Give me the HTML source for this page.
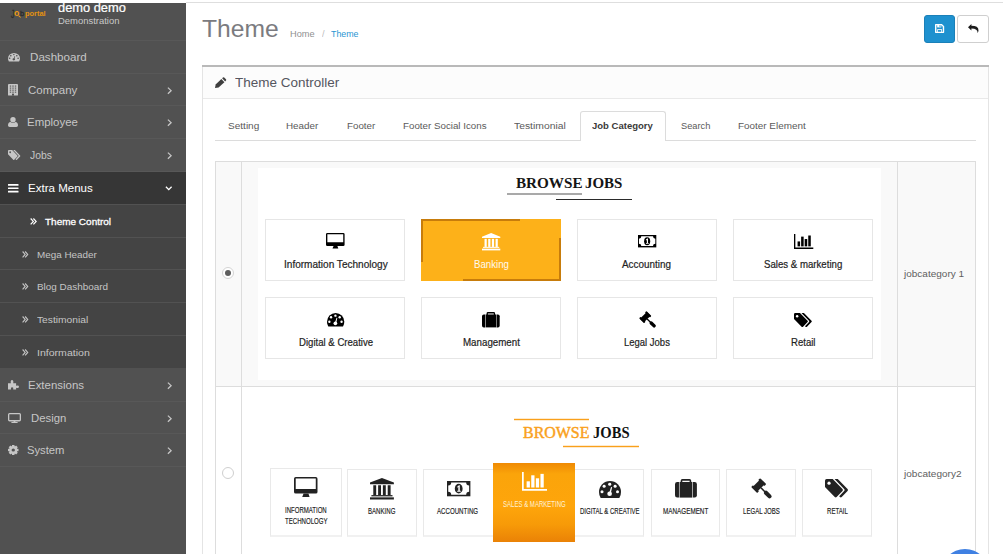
<!DOCTYPE html>
<html lang="en"><head><meta charset="utf-8"><title>Theme</title>
<style>
html,body{margin:0;padding:0;}
body{width:1003px;height:554px;background:#ffffff;font-family:"Liberation Sans", sans-serif;}
#root{position:relative;width:1003px;height:554px;overflow:hidden;background:#ffffff;}
.b{position:absolute;}
.i{position:absolute;display:block;overflow:visible;}
.t{position:absolute;white-space:nowrap;line-height:1;transform-origin:0 0;}
</style></head>
<body>
<div id="root">
<div class="b" style="left:186px;top:2px;width:817px;height:1px;background:#dedede;"></div>
<div class="b" style="left:0px;top:3px;width:186px;height:551px;background:#515151;"></div>
<div class="b" style="left:0px;top:40px;width:186px;height:1px;background:#585858;"></div>
<div class="b" style="left:0px;top:73px;width:186px;height:1px;background:#585858;"></div>
<div class="b" style="left:0px;top:105px;width:186px;height:1px;background:#585858;"></div>
<div class="b" style="left:0px;top:138px;width:186px;height:1px;background:#585858;"></div>
<div class="b" style="left:0px;top:401px;width:186px;height:1px;background:#585858;"></div>
<div class="b" style="left:0px;top:433px;width:186px;height:1px;background:#585858;"></div>
<div class="b" style="left:0px;top:466px;width:186px;height:1px;background:#585858;"></div>
<div class="b" style="left:0px;top:171px;width:186px;height:1px;background:#585858;"></div>
<div class="b" style="left:0px;top:172px;width:186px;height:32px;background:#363636;"></div>
<div class="b" style="left:0px;top:204px;width:186px;height:164px;background:#444444;"></div>
<div class="b" style="left:0px;top:204px;width:186px;height:1px;background:#525252;"></div>
<div class="b" style="left:0px;top:237px;width:186px;height:1px;background:#525252;"></div>
<div class="b" style="left:0px;top:269px;width:186px;height:1px;background:#525252;"></div>
<div class="b" style="left:0px;top:302px;width:186px;height:1px;background:#525252;"></div>
<div class="b" style="left:0px;top:335px;width:186px;height:1px;background:#525252;"></div>
<div class="b" style="left:18.0px;top:16.2px;width:3.0px;height:1.2px;background:#ef9a13;transform:rotate(38deg);border-radius:1px;"></div>
<div class="b" style="left:924px;top:15px;width:31px;height:28px;background:#1e91cf;border:1px solid #1b80b8;box-sizing:border-box;border-radius:3px;"></div>
<div class="b" style="left:957px;top:15px;width:32px;height:28px;background:#ffffff;border:1px solid #cfcfcf;box-sizing:border-box;border-radius:3px;"></div>
<div class="b" style="left:202px;top:65px;width:787px;height:495px;background:#ffffff;border:1px solid #e4e4e4;box-sizing:border-box;"></div>
<div class="b" style="left:202px;top:65px;width:787px;height:2px;background:#b9b9b9;"></div>
<div class="b" style="left:203px;top:67px;width:785px;height:31px;background:#fcfcfc;"></div>
<div class="b" style="left:203px;top:98px;width:785px;height:1px;background:#e9e9e9;"></div>
<div class="b" style="left:215px;top:140px;width:761px;height:1px;background:#dcdcdc;"></div>
<div class="b" style="left:580px;top:111px;width:86px;height:30px;background:#ffffff;border:1px solid #dcdcdc;box-sizing:border-box;border-radius:3px;border-bottom:none;border-bottom-left-radius:0;border-bottom-right-radius:0;"></div>
<div class="b" style="left:215px;top:161px;width:761px;height:226px;background:#f9f9f9;"></div>
<div class="b" style="left:215px;top:161px;width:761px;height:1px;background:#dddddd;"></div>
<div class="b" style="left:215px;top:386px;width:761px;height:1px;background:#dddddd;"></div>
<div class="b" style="left:215px;top:161px;width:1px;height:393px;background:#dddddd;"></div>
<div class="b" style="left:975px;top:161px;width:1px;height:393px;background:#dddddd;"></div>
<div class="b" style="left:241px;top:161px;width:1px;height:393px;background:#dddddd;"></div>
<div class="b" style="left:897px;top:161px;width:1px;height:393px;background:#dddddd;"></div>
<div class="b" style="left:258px;top:168px;width:623px;height:212px;background:#ffffff;"></div>
<div class="b" style="left:222px;top:267px;width:12px;height:12px;background:#ffffff;border:1px solid #d4d4d4;box-sizing:border-box;border-radius:6px;"></div>
<div class="b" style="left:225.2px;top:270.2px;width:5.6px;height:5.6px;background:#5e5e5e;border-radius:3px;"></div>
<div class="b" style="left:222px;top:467px;width:12px;height:12px;background:#ffffff;border:1px solid #cfcfcf;box-sizing:border-box;border-radius:6px;"></div>
<div class="b" style="left:507px;top:193px;width:75px;height:1.8px;background:#a9a9a9;"></div>
<div class="b" style="left:556.3px;top:198.6px;width:75.7px;height:1.0px;background:#2a2a2a;"></div>
<div class="b" style="left:265.2px;top:219.4px;width:139.5px;height:61.3px;background:#ffffff;border:1px solid #e6e6e6;box-sizing:border-box;"></div>
<div class="b" style="left:265.2px;top:297.3px;width:139.5px;height:61.5px;background:#ffffff;border:1px solid #e6e6e6;box-sizing:border-box;"></div>
<div class="b" style="left:421.2px;top:219.4px;width:139.5px;height:61.3px;background:#ffffff;border:1px solid #e6e6e6;box-sizing:border-box;"></div>
<div class="b" style="left:421.2px;top:297.3px;width:139.5px;height:61.5px;background:#ffffff;border:1px solid #e6e6e6;box-sizing:border-box;"></div>
<div class="b" style="left:577.2px;top:219.4px;width:139.5px;height:61.3px;background:#ffffff;border:1px solid #e6e6e6;box-sizing:border-box;"></div>
<div class="b" style="left:577.2px;top:297.3px;width:139.5px;height:61.5px;background:#ffffff;border:1px solid #e6e6e6;box-sizing:border-box;"></div>
<div class="b" style="left:733.2px;top:219.4px;width:139.5px;height:61.3px;background:#ffffff;border:1px solid #e6e6e6;box-sizing:border-box;"></div>
<div class="b" style="left:733.2px;top:297.3px;width:139.5px;height:61.5px;background:#ffffff;border:1px solid #e6e6e6;box-sizing:border-box;"></div>
<div class="b" style="left:420.9px;top:219px;width:140.2px;height:62px;background:#fdb119;"></div>
<div class="b" style="left:420.9px;top:219px;width:98.7px;height:2px;background:#c77c0b;"></div>
<div class="b" style="left:421px;top:219px;width:1.6px;height:42.8px;background:#c77c0b;"></div>
<div class="b" style="left:462.8px;top:279px;width:98.3px;height:2px;background:#c77c0b;"></div>
<div class="b" style="left:559.4px;top:237.9px;width:1.6px;height:43.1px;background:#c77c0b;"></div>
<div class="b" style="left:513.9px;top:419px;width:75.2px;height:1px;background:#f9a11c;"></div>
<div class="b" style="left:513.9px;top:418px;width:75.2px;height:3px;background:rgba(249,161,28,0.22);"></div>
<div class="b" style="left:563.3px;top:446px;width:75.6px;height:1px;background:#f9a11c;"></div>
<div class="b" style="left:563.3px;top:445px;width:75.6px;height:3px;background:rgba(249,161,28,0.22);"></div>
<div class="b" style="left:270.2px;top:468.3px;width:71.6px;height:68.7px;background:#fff;border:1px solid #e9e9e9;box-sizing:border-box;border-bottom:2px solid #f1f1f1;"></div>
<div class="b" style="left:347.3px;top:469.3px;width:69.4px;height:67.7px;background:#fff;border:1px solid #e9e9e9;box-sizing:border-box;border-bottom:2px solid #f1f1f1;"></div>
<div class="b" style="left:423.3px;top:469.3px;width:70.7px;height:67.7px;background:#fff;border:1px solid #e9e9e9;box-sizing:border-box;border-bottom:2px solid #f1f1f1;"></div>
<div class="b" style="left:574px;top:469.3px;width:70.1px;height:67.7px;background:#fff;border:1px solid #e9e9e9;box-sizing:border-box;border-bottom:2px solid #f1f1f1;"></div>
<div class="b" style="left:650.9px;top:469.3px;width:69.0px;height:67.7px;background:#fff;border:1px solid #e9e9e9;box-sizing:border-box;border-bottom:2px solid #f1f1f1;"></div>
<div class="b" style="left:726.1px;top:469.3px;width:70.0px;height:67.7px;background:#fff;border:1px solid #e9e9e9;box-sizing:border-box;border-bottom:2px solid #f1f1f1;"></div>
<div class="b" style="left:802.4px;top:469.3px;width:69.4px;height:67.7px;background:#fff;border:1px solid #e9e9e9;box-sizing:border-box;border-bottom:2px solid #f1f1f1;"></div>
<div class="b" style="left:492.9px;top:462.5px;width:82.2px;height:79.6px;background:linear-gradient(180deg,#ef8a04 0%,#fba40a 14%,#fea50b 55%,#f79a08 78%,#ea8206 100%);"></div>
<div class="b" style="left:941px;top:548.6px;width:48px;height:48.0px;background:#3f80e2;border-radius:24px;"></div>
<svg class="i" style="left:8px;top:53.4px;width:12px;height:8.4px;color:#c6c6c6;" viewBox="0 0 24 18.6" preserveAspectRatio="none" fill="currentColor"><path d="M0,12A12,12 0 0 1 24,12Q24,15.6 22.2,18.6H1.8Q0,15.6 0,12Z"/><g fill="#515151"><circle cx="3.3" cy="11.9" r="1.65"/><circle cx="5.6" cy="5.9" r="1.65"/><circle cx="11.7" cy="3.6" r="1.65"/><circle cx="17.6" cy="5.9" r="1.65"/><circle cx="20.2" cy="11.9" r="1.65"/><circle cx="11.6" cy="14.1" r="2.55"/><path d="M11.3,12.6L13.2,6.5L14.3,6.8L12.9,13.4Z"/></g></svg>
<svg class="i" style="left:8px;top:84.4px;width:10px;height:11.6px;color:#c6c6c6;" viewBox="0 0 10 12" preserveAspectRatio="none" fill="currentColor"><rect x="0" y="0" width="10" height="12" rx="0.9"/><rect x="1.8" y="1.6" width="1.4" height="1.1" fill="#515151"/><rect x="4.3" y="1.6" width="1.4" height="1.1" fill="#515151"/><rect x="6.8" y="1.6" width="1.4" height="1.1" fill="#515151"/><rect x="1.8" y="3.7" width="1.4" height="1.1" fill="#515151"/><rect x="4.3" y="3.7" width="1.4" height="1.1" fill="#515151"/><rect x="6.8" y="3.7" width="1.4" height="1.1" fill="#515151"/><rect x="1.8" y="5.800000000000001" width="1.4" height="1.1" fill="#515151"/><rect x="4.3" y="5.800000000000001" width="1.4" height="1.1" fill="#515151"/><rect x="6.8" y="5.800000000000001" width="1.4" height="1.1" fill="#515151"/><rect x="1.8" y="7.9" width="1.4" height="1.1" fill="#515151"/><rect x="4.3" y="7.9" width="1.4" height="1.1" fill="#515151"/><rect x="6.8" y="7.9" width="1.4" height="1.1" fill="#515151"/><rect x="4" y="10" width="2" height="2" fill="#515151"/></svg>
<svg class="i" style="left:8px;top:117px;width:10px;height:10px;color:#c6c6c6;" viewBox="0 0 10 10" preserveAspectRatio="none" fill="currentColor"><circle cx="5" cy="2.7" r="2.7"/><path d="M0,8.6Q0,5.4 2.6,5.1Q5,6.9 7.4,5.1Q10,5.4 10,8.6Q10,10 8.4,10H1.6Q0,10 0,8.6Z"/></svg>
<svg class="i" style="left:8px;top:150px;width:12.5px;height:10px;color:#c6c6c6;" viewBox="0 0 24.8 19.2" preserveAspectRatio="none" fill="currentColor"><path d="M0,1.7Q0,0 1.7,0H8.2L18.6,10.4Q19.6,11.4 18.6,12.4L12.4,18.6Q11.4,19.6 10.4,18.6L0,8.2Z"/><circle cx="4.3" cy="4.3" r="1.7" fill="#515151"/><path d="M10.2,0H13.6L24,10.4Q25,11.4 24,12.4L17.8,18.6Q16.8,19.6 15.8,18.6L15.1,17.9L20.6,12.1Q21.3,11.4 20.6,10.7Z"/></svg>
<svg class="i" style="left:8px;top:184px;width:10.5px;height:8.5px;color:#ffffff;" viewBox="0 0 10.5 8.5" preserveAspectRatio="none" fill="currentColor"><rect x="0" y="0" width="10.5" height="1.7" rx=".3"/><rect x="0" y="3.4" width="10.5" height="1.7" rx=".3"/><rect x="0" y="6.8" width="10.5" height="1.7" rx=".3"/></svg>
<svg class="i" style="left:8px;top:379.5px;width:11px;height:9.5px;color:#c6c6c6;" viewBox="0 0 11 9.6" preserveAspectRatio="none" fill="currentColor"><path d="M0,3.4H2.9Q2.2,0.2 4,0Q5.9,0.2 5.2,3.4H8.1V5.9Q10.9,5 11,6.9Q10.9,8.8 8.1,7.9V9.6H5.2Q5.8,7.4 4.1,7.4Q2.4,7.4 3,9.6H0Z"/></svg>
<svg class="i" style="left:8px;top:413px;width:13px;height:10px;color:#c6c6c6;" viewBox="0 0 13 10" preserveAspectRatio="none" fill="currentColor"><rect x="0.65" y="0.65" width="11.7" height="7.1" rx="0.9" fill="none" stroke="currentColor" stroke-width="1.3"/><rect x="3.4" y="8.9" width="6.2" height="1.1"/><rect x="5.6" y="7.6" width="1.8" height="1.6"/></svg>
<svg class="i" style="left:8px;top:445.3px;width:10.5px;height:10.0px;color:#c6c6c6;" viewBox="-5.25 -5.25 10.5 10.5" preserveAspectRatio="none" fill="currentColor"><circle r="4.1"/><rect x="-1.25" y="-5.25" width="2.5" height="10.5" transform="rotate(0)"/><rect x="-1.25" y="-5.25" width="2.5" height="10.5" transform="rotate(45)"/><rect x="-1.25" y="-5.25" width="2.5" height="10.5" transform="rotate(90)"/><rect x="-1.25" y="-5.25" width="2.5" height="10.5" transform="rotate(135)"/><circle r="1.7" fill="#515151"/></svg>
<svg class="i" style="left:166.8px;top:86.8px;width:5.2px;height:7.3px;color:#c6c6c6;" viewBox="0 0 5.2 7.3" preserveAspectRatio="none" fill="currentColor"><path fill="none" stroke="currentColor" stroke-width="1.3" d="M0.9,0.6L4.1,3.65L0.9,6.7"/></svg>
<svg class="i" style="left:166.8px;top:118.8px;width:5.2px;height:7.3px;color:#c6c6c6;" viewBox="0 0 5.2 7.3" preserveAspectRatio="none" fill="currentColor"><path fill="none" stroke="currentColor" stroke-width="1.3" d="M0.9,0.6L4.1,3.65L0.9,6.7"/></svg>
<svg class="i" style="left:166.8px;top:151.79999999999998px;width:5.2px;height:7.3px;color:#c6c6c6;" viewBox="0 0 5.2 7.3" preserveAspectRatio="none" fill="currentColor"><path fill="none" stroke="currentColor" stroke-width="1.3" d="M0.9,0.6L4.1,3.65L0.9,6.7"/></svg>
<svg class="i" style="left:166.8px;top:381.8px;width:5.2px;height:7.3px;color:#c6c6c6;" viewBox="0 0 5.2 7.3" preserveAspectRatio="none" fill="currentColor"><path fill="none" stroke="currentColor" stroke-width="1.3" d="M0.9,0.6L4.1,3.65L0.9,6.7"/></svg>
<svg class="i" style="left:166.8px;top:414.8px;width:5.2px;height:7.3px;color:#c6c6c6;" viewBox="0 0 5.2 7.3" preserveAspectRatio="none" fill="currentColor"><path fill="none" stroke="currentColor" stroke-width="1.3" d="M0.9,0.6L4.1,3.65L0.9,6.7"/></svg>
<svg class="i" style="left:166.8px;top:446.8px;width:5.2px;height:7.3px;color:#c6c6c6;" viewBox="0 0 5.2 7.3" preserveAspectRatio="none" fill="currentColor"><path fill="none" stroke="currentColor" stroke-width="1.3" d="M0.9,0.6L4.1,3.65L0.9,6.7"/></svg>
<svg class="i" style="left:164.5px;top:185.7px;width:7.5px;height:4.7px;color:#ffffff;" viewBox="0 0 7.5 4.7" preserveAspectRatio="none" fill="currentColor"><path fill="none" stroke="currentColor" stroke-width="1.3" d="M0.9,0.8L3.75,3.7L6.6,0.8"/></svg>
<svg class="i" style="left:29.5px;top:218.3px;width:6.8px;height:6.8px;color:#ffffff;" viewBox="0 0 6.4 6.8" preserveAspectRatio="none" fill="currentColor"><path fill="none" stroke="currentColor" stroke-width="1.15" d="M0.6,0.5L3.2,3.4L0.6,6.3M3.2,0.5L5.8,3.4L3.2,6.3"/></svg>
<svg class="i" style="left:22px;top:250.70000000000002px;width:6.3px;height:6.8px;color:#c4c4c4;" viewBox="0 0 6.4 6.8" preserveAspectRatio="none" fill="currentColor"><path fill="none" stroke="currentColor" stroke-width="1.15" d="M0.6,0.5L3.2,3.4L0.6,6.3M3.2,0.5L5.8,3.4L3.2,6.3"/></svg>
<svg class="i" style="left:22px;top:282.59999999999997px;width:6.3px;height:6.8px;color:#c4c4c4;" viewBox="0 0 6.4 6.8" preserveAspectRatio="none" fill="currentColor"><path fill="none" stroke="currentColor" stroke-width="1.15" d="M0.6,0.5L3.2,3.4L0.6,6.3M3.2,0.5L5.8,3.4L3.2,6.3"/></svg>
<svg class="i" style="left:22px;top:315.79999999999995px;width:6.3px;height:6.8px;color:#c4c4c4;" viewBox="0 0 6.4 6.8" preserveAspectRatio="none" fill="currentColor"><path fill="none" stroke="currentColor" stroke-width="1.15" d="M0.6,0.5L3.2,3.4L0.6,6.3M3.2,0.5L5.8,3.4L3.2,6.3"/></svg>
<svg class="i" style="left:22px;top:348.7px;width:6.3px;height:6.8px;color:#c4c4c4;" viewBox="0 0 6.4 6.8" preserveAspectRatio="none" fill="currentColor"><path fill="none" stroke="currentColor" stroke-width="1.15" d="M0.6,0.5L3.2,3.4L0.6,6.3M3.2,0.5L5.8,3.4L3.2,6.3"/></svg>
<svg class="i" style="left:934.7px;top:24.1px;width:9.2px;height:9.0px;color:#ffffff;" viewBox="0 0 9.6 9.2" preserveAspectRatio="none" fill="currentColor"><path fill-rule="evenodd" d="M0.7,0H7.2L9.6,2.3V8.5Q9.6,9.2 8.9,9.2H0.7Q0,9.2 0,8.5V0.7Q0,0 0.7,0ZM1.5,1.4V7.8H8.1V2.9L6.6,1.4Z"/><rect x="2.3" y="0.8" width="4.3" height="2.7"/><rect x="4.7" y="1.2" width="1.1" height="1.7" fill="#1e91cf"/><rect x="2.3" y="5.3" width="5" height="3.2"/><rect x="3.1" y="6.2" width="3.4" height="1.7" fill="#1e91cf"/></svg>
<svg class="i" style="left:968.4px;top:23.7px;width:10.5px;height:9.1px;color:#1c1c1c;" viewBox="0 0 10.5 9.1" preserveAspectRatio="none" fill="currentColor"><path d="M3.4,0V1.8Q10.5,1.8 10.5,6.2Q10.5,7.8 9.5,9.1Q10,4.7 3.4,4.6V6.5L0,3.25Z"/></svg>
<svg class="i" style="left:214.7px;top:76.8px;width:11.5px;height:11.0px;color:#3f3f3f;" viewBox="0 0 11 10.5" preserveAspectRatio="none" fill="currentColor"><path d="M7.6,0.5Q8.2,-0.1 8.8,0.5L10.5,2.2Q11.1,2.8 10.5,3.4L9.7,4.2L6.8,1.3Z"/><path d="M6.1,2L9,4.9L3.4,10.1L0,10.5L0.6,7.2Z"/></svg>
<svg class="i" style="left:326px;top:232.9px;width:18.6px;height:15.6px;color:#000000;" viewBox="0 0 30 26" preserveAspectRatio="none" fill="currentColor"><path fill-rule="evenodd" d="M2.2,0H27.8A2.2,2.2 0 0 1 30,2.2V19.5A2.2,2.2 0 0 1 27.8,21.7H2.2A2.2,2.2 0 0 1 0,19.5V2.2A2.2,2.2 0 0 1 2.2,0ZM2.2,2V15.6H27.8V2Z"/><path d="M12.2,21.5H18.4L19.9,26H10.5Z"/></svg>
<svg class="i" style="left:481.8px;top:232.5px;width:18.3px;height:17.4px;color:#ffffff;" viewBox="0 0 24 22" preserveAspectRatio="none" fill="currentColor"><path d="M12,0L24,4.7V6.3H0V4.7Z"/><rect x="3.3" y="7.4" width="2.9" height="10.2"/><rect x="8.15" y="7.4" width="2.9" height="10.2"/><rect x="12.95" y="7.4" width="2.9" height="10.2"/><rect x="17.8" y="7.4" width="2.9" height="10.2"/><rect x="1.4" y="17.5" width="21.2" height="1.3"/><rect x="0" y="19.8" width="24" height="2.2"/></svg>
<svg class="i" style="left:637.8px;top:234.9px;width:18.3px;height:12.4px;color:#000000;" viewBox="0 0 30 20" preserveAspectRatio="none" fill="currentColor"><rect x="0" y="0" width="30" height="20"/><path fill="#fff" d="M5.4,2.1H24.6A3.8,3.8 0 0 0 28.4,5.9V14.1A3.8,3.8 0 0 0 24.6,17.9H5.4A3.8,3.8 0 0 0 1.6,14.1V5.9A3.8,3.8 0 0 0 5.4,2.1Z"/><ellipse cx="15" cy="10" rx="5" ry="6.4"/><path fill="#fff" d="M13.1,7.4L15.3,5.7H16.4V12.8H17.6V14.2H13.1V12.8H14.5V7.9L13.1,8.8Z"/></svg>
<svg class="i" style="left:793.8px;top:233.5px;width:19.3px;height:15.0px;color:#000000;" viewBox="0 0 26 20" preserveAspectRatio="none" fill="currentColor"><path d="M0,0H1.8V18.1H26V20H0Z"/><rect x="4.8" y="9.9" width="3.4" height="6.6"/><rect x="9.6" y="3.5" width="3.4" height="13"/><rect x="14.4" y="6.7" width="3.4" height="9.8"/><rect x="19.2" y="2" width="3.4" height="14.5"/></svg>
<svg class="i" style="left:326.8px;top:313.3px;width:17.3px;height:13.6px;color:#000000;" viewBox="0 0 24 18.6" preserveAspectRatio="none" fill="currentColor"><path d="M0,12A12,12 0 0 1 24,12Q24,15.6 22.2,18.6H1.8Q0,15.6 0,12Z"/><g fill="#fff"><circle cx="3.3" cy="11.9" r="1.65"/><circle cx="5.6" cy="5.9" r="1.65"/><circle cx="11.7" cy="3.6" r="1.65"/><circle cx="17.6" cy="5.9" r="1.65"/><circle cx="20.2" cy="11.9" r="1.65"/><circle cx="11.6" cy="14.1" r="2.55"/><path d="M11.3,12.6L13.2,6.5L14.3,6.8L12.9,13.4Z"/></g></svg>
<svg class="i" style="left:482.4px;top:311.9px;width:17.7px;height:15.4px;color:#000000;" viewBox="0 0 24 20" preserveAspectRatio="none" fill="currentColor"><path fill="none" stroke="currentColor" stroke-width="1.8" d="M7.1,3.8V1.9A1,1 0 0 1 8.1,0.9H15.9A1,1 0 0 1 16.9,1.9V3.8"/><rect x="5" y="3.2" width="14" height="16.8"/><path d="M4.35,3.2V20H2.4A2.4,2.4 0 0 1 0,17.6V5.6A2.4,2.4 0 0 1 2.4,3.2Z"/><path d="M19.65,3.2V20H21.6A2.4,2.4 0 0 0 24,17.6V5.6A2.4,2.4 0 0 0 21.6,3.2Z"/></svg>
<svg class="i" style="left:638.8px;top:310.9px;width:17.3px;height:17.0px;color:#000000;" viewBox="-11.8 -11.8 23.6 23.6" preserveAspectRatio="none" fill="currentColor"><g transform="rotate(45)"><rect x="-8.3" y="-6.6" width="7.4" height="13.2"/><rect x="-9.4" y="-7.1" width="9.6" height="2.9" rx="0.9"/><rect x="-9.4" y="4.2" width="9.6" height="2.9" rx="0.9"/><rect x="-1" y="-0.85" width="7" height="1.7"/><rect x="4.6" y="-2.3" width="10.2" height="4.6" rx="2.2"/></g></svg>
<svg class="i" style="left:793.9px;top:312.5px;width:18.1px;height:14.1px;color:#000000;" viewBox="0 0 24.8 19.2" preserveAspectRatio="none" fill="currentColor"><path d="M0,1.7Q0,0 1.7,0H8.2L18.6,10.4Q19.6,11.4 18.6,12.4L12.4,18.6Q11.4,19.6 10.4,18.6L0,8.2Z"/><circle cx="4.3" cy="4.3" r="1.7" fill="#fff"/><path d="M10.2,0H13.6L24,10.4Q25,11.4 24,12.4L17.8,18.6Q16.8,19.6 15.8,18.6L15.1,17.9L20.6,12.1Q21.3,11.4 20.6,10.7Z"/></svg>
<svg class="i" style="left:293.7px;top:476.9px;width:23.5px;height:19.9px;color:#222222;" viewBox="0 0 30 26" preserveAspectRatio="none" fill="currentColor"><path fill-rule="evenodd" d="M2.2,0H27.8A2.2,2.2 0 0 1 30,2.2V19.5A2.2,2.2 0 0 1 27.8,21.7H2.2A2.2,2.2 0 0 1 0,19.5V2.2A2.2,2.2 0 0 1 2.2,0ZM2.2,2V15.6H27.8V2Z"/><path d="M12.2,21.5H18.4L19.9,26H10.5Z"/></svg>
<svg class="i" style="left:369.5px;top:477.9px;width:23.9px;height:21.5px;color:#222222;" viewBox="0 0 24 22" preserveAspectRatio="none" fill="currentColor"><path d="M12,0L24,4.7V6.3H0V4.7Z"/><rect x="3.3" y="7.4" width="2.9" height="10.2"/><rect x="8.15" y="7.4" width="2.9" height="10.2"/><rect x="12.95" y="7.4" width="2.9" height="10.2"/><rect x="17.8" y="7.4" width="2.9" height="10.2"/><rect x="1.4" y="17.5" width="21.2" height="1.3"/><rect x="0" y="19.8" width="24" height="2.2"/></svg>
<svg class="i" style="left:446.6px;top:480.9px;width:23.4px;height:15.3px;color:#222222;" viewBox="0 0 30 20" preserveAspectRatio="none" fill="currentColor"><rect x="0" y="0" width="30" height="20"/><path fill="#fff" d="M5.4,2.1H24.6A3.8,3.8 0 0 0 28.4,5.9V14.1A3.8,3.8 0 0 0 24.6,17.9H5.4A3.8,3.8 0 0 0 1.6,14.1V5.9A3.8,3.8 0 0 0 5.4,2.1Z"/><ellipse cx="15" cy="10" rx="5" ry="6.4"/><path fill="#fff" d="M13.1,7.4L15.3,5.7H16.4V12.8H17.6V14.2H13.1V12.8H14.5V7.9L13.1,8.8Z"/></svg>
<svg class="i" style="left:521.8px;top:472px;width:25.0px;height:18.8px;color:#ffffff;" viewBox="0 0 26 20" preserveAspectRatio="none" fill="currentColor"><path d="M0,0H1.8V18.1H26V20H0Z"/><rect x="4.8" y="9.9" width="3.4" height="6.6"/><rect x="9.6" y="3.5" width="3.4" height="13"/><rect x="14.4" y="6.7" width="3.4" height="9.8"/><rect x="19.2" y="2" width="3.4" height="14.5"/></svg>
<svg class="i" style="left:599px;top:480.9px;width:22px;height:16.9px;color:#222222;" viewBox="0 0 24 18.6" preserveAspectRatio="none" fill="currentColor"><path d="M0,12A12,12 0 0 1 24,12Q24,15.6 22.2,18.6H1.8Q0,15.6 0,12Z"/><g fill="#fff"><circle cx="3.3" cy="11.9" r="1.65"/><circle cx="5.6" cy="5.9" r="1.65"/><circle cx="11.7" cy="3.6" r="1.65"/><circle cx="17.6" cy="5.9" r="1.65"/><circle cx="20.2" cy="11.9" r="1.65"/><circle cx="11.6" cy="14.1" r="2.55"/><path d="M11.3,12.6L13.2,6.5L14.3,6.8L12.9,13.4Z"/></g></svg>
<svg class="i" style="left:674.7px;top:479.3px;width:21.9px;height:18.6px;color:#222222;" viewBox="0 0 24 20" preserveAspectRatio="none" fill="currentColor"><path fill="none" stroke="currentColor" stroke-width="1.8" d="M7.1,3.8V1.9A1,1 0 0 1 8.1,0.9H15.9A1,1 0 0 1 16.9,1.9V3.8"/><rect x="5" y="3.2" width="14" height="16.8"/><path d="M4.35,3.2V20H2.4A2.4,2.4 0 0 1 0,17.6V5.6A2.4,2.4 0 0 1 2.4,3.2Z"/><path d="M19.65,3.2V20H21.6A2.4,2.4 0 0 0 24,17.6V5.6A2.4,2.4 0 0 0 21.6,3.2Z"/></svg>
<svg class="i" style="left:751.2px;top:478.3px;width:21.2px;height:20.9px;color:#222222;" viewBox="-11.8 -11.8 23.6 23.6" preserveAspectRatio="none" fill="currentColor"><g transform="rotate(45)"><rect x="-8.3" y="-6.6" width="7.4" height="13.2"/><rect x="-9.4" y="-7.1" width="9.6" height="2.9" rx="0.9"/><rect x="-9.4" y="4.2" width="9.6" height="2.9" rx="0.9"/><rect x="-1" y="-0.85" width="7" height="1.7"/><rect x="4.6" y="-2.3" width="10.2" height="4.6" rx="2.2"/></g></svg>
<svg class="i" style="left:824.9px;top:479.3px;width:23.3px;height:18.5px;color:#222222;" viewBox="0 0 24.8 19.2" preserveAspectRatio="none" fill="currentColor"><path d="M0,1.7Q0,0 1.7,0H8.2L18.6,10.4Q19.6,11.4 18.6,12.4L12.4,18.6Q11.4,19.6 10.4,18.6L0,8.2Z"/><circle cx="4.3" cy="4.3" r="1.7" fill="#fff"/><path d="M10.2,0H13.6L24,10.4Q25,11.4 24,12.4L17.8,18.6Q16.8,19.6 15.8,18.6L15.1,17.9L20.6,12.1Q21.3,11.4 20.6,10.7Z"/></svg>
<span class="t" style="left:10.8px;top:10.00px;font-size:10.2px;color:#2b2b2b;-webkit-text-stroke:0.3px #2b2b2b;transform:scaleX(0.6871);">J</span>
<span class="t" style="left:14.4px;top:8.00px;font-size:9.6px;color:#ef9a13;font-weight:700;transform:scaleX(0.9021);">o</span>
<span class="t" style="left:19.8px;top:10.00px;font-size:8.0px;color:#2b2b2b;-webkit-text-stroke:0.3px #2b2b2b;transform:scaleX(0.9656);">b</span>
<span class="t" style="left:25.2px;top:10.00px;font-size:7px;color:#e5920f;font-weight:700;transform:scaleX(1.0590);">portal</span>
<span class="t" style="left:58.2px;top:2.00px;font-size:12px;color:#ffffff;-webkit-text-stroke:0.22px #fff;transform:scaleX(1.0698);">demo demo</span>
<span class="t" style="left:58.2px;top:16.00px;font-size:9.6px;color:#c8c8c8;transform:scaleX(0.9841);">Demonstration</span>
<span class="t" style="left:29.5px;top:52.00px;font-size:11.3px;color:#c6c6c6;transform:scaleX(1.0278);">Dashboard</span>
<span class="t" style="left:27.5px;top:85.00px;font-size:11.3px;color:#c6c6c6;transform:scaleX(1.0195);">Company</span>
<span class="t" style="left:26.5px;top:117.00px;font-size:11.3px;color:#c6c6c6;transform:scaleX(1.0129);">Employee</span>
<span class="t" style="left:29.5px;top:150.00px;font-size:11.3px;color:#c6c6c6;transform:scaleX(0.9173);">Jobs</span>
<span class="t" style="left:27.5px;top:183.00px;font-size:11.3px;color:#ffffff;transform:scaleX(1.0217);">Extra Menus</span>
<span class="t" style="left:28.3px;top:380.00px;font-size:11.3px;color:#c6c6c6;transform:scaleX(1.0133);">Extensions</span>
<span class="t" style="left:30.5px;top:413.00px;font-size:11.3px;color:#c6c6c6;transform:scaleX(1.0036);">Design</span>
<span class="t" style="left:27.3px;top:445.00px;font-size:11.3px;color:#c6c6c6;transform:scaleX(0.9954);">System</span>
<span class="t" style="left:44.9px;top:217.00px;font-size:9.5px;color:#ffffff;-webkit-text-stroke:0.28px #fff;transform:scaleX(1.0518);">Theme Control</span>
<span class="t" style="left:36.9px;top:250.00px;font-size:9.5px;color:#c4c4c4;transform:scaleX(1.0389);">Mega Header</span>
<span class="t" style="left:36.9px;top:282.00px;font-size:9.5px;color:#c4c4c4;transform:scaleX(1.0434);">Blog Dashboard</span>
<span class="t" style="left:36.9px;top:315.00px;font-size:9.5px;color:#c4c4c4;transform:scaleX(1.0772);">Testimonial</span>
<span class="t" style="left:36.9px;top:348.00px;font-size:9.5px;color:#c4c4c4;transform:scaleX(1.1108);">Information</span>
<span class="t" style="left:202px;top:17.00px;font-size:24.2px;color:#7b7b80;transform:scaleX(1.0188);">Theme</span>
<span class="t" style="left:290px;top:30.00px;font-size:9px;color:#909090;transform:scaleX(1.0243);">Home</span>
<span class="t" style="left:321.6px;top:30.00px;font-size:9px;color:#bcbcbc;transform:scaleX(1.0335);">/</span>
<span class="t" style="left:331px;top:30.00px;font-size:9px;color:#2a96d2;transform:scaleX(0.9816);">Theme</span>
<span class="t" style="left:235.3px;top:77.00px;font-size:12.2px;color:#55565f;transform:scaleX(1.1067);">Theme Controller</span>
<span class="t" style="left:227.5px;top:121.00px;font-size:9.7px;color:#5a5a5a;transform:scaleX(1.0374);">Setting</span>
<span class="t" style="left:286.3px;top:121.00px;font-size:9.7px;color:#5a5a5a;transform:scaleX(1.0163);">Header</span>
<span class="t" style="left:346.6px;top:121.00px;font-size:9.7px;color:#5a5a5a;transform:scaleX(1.0107);">Footer</span>
<span class="t" style="left:402.5px;top:121.00px;font-size:9.7px;color:#5a5a5a;transform:scaleX(1.0082);">Footer Social Icons</span>
<span class="t" style="left:513.6px;top:121.00px;font-size:9.7px;color:#5a5a5a;transform:scaleX(1.0687);">Testimonial</span>
<span class="t" style="left:680.6px;top:121.00px;font-size:9.7px;color:#5a5a5a;transform:scaleX(0.9576);">Search</span>
<span class="t" style="left:738.3px;top:121.00px;font-size:9.7px;color:#5a5a5a;transform:scaleX(1.0221);">Footer Element</span>
<span class="t" style="left:592.3px;top:121.00px;font-size:9.7px;color:#3a3a3a;font-weight:700;transform:scaleX(0.9821);">Job Category</span>
<span class="t" style="left:904px;top:269.00px;font-size:9.7px;color:#5e5e5e;transform:scaleX(1.0331);">jobcategory 1</span>
<span class="t" style="left:904.3px;top:469.00px;font-size:9.7px;color:#5e5e5e;transform:scaleX(1.0381);">jobcategory2</span>
<span class="t" style="left:516px;top:175.00px;font-size:15.2px;color:#151515;font-weight:700;font-family:'Liberation Serif',serif;transform:scaleX(0.9987);">BROWSE</span>
<span class="t" style="left:584.6px;top:175.00px;font-size:15.2px;color:#151515;font-weight:700;font-family:'Liberation Serif',serif;transform:scaleX(0.9846);">JOBS</span>
<span class="t" style="left:283.8px;top:259.00px;font-size:11.2px;color:#1f1f1f;-webkit-text-stroke:0.22px #1f1f1f;transform:scaleX(0.8981);">Information Technology</span>
<span class="t" style="left:473.8px;top:259.00px;font-size:11.2px;color:#fffaf0;transform:scaleX(0.8631);">Banking</span>
<span class="t" style="left:622.4px;top:259.00px;font-size:11.2px;color:#1f1f1f;-webkit-text-stroke:0.22px #1f1f1f;transform:scaleX(0.8833);">Accounting</span>
<span class="t" style="left:764.3px;top:259.00px;font-size:11.2px;color:#1f1f1f;-webkit-text-stroke:0.22px #1f1f1f;transform:scaleX(0.8624);">Sales &amp; marketing</span>
<span class="t" style="left:298.5px;top:337.00px;font-size:11.2px;color:#1f1f1f;-webkit-text-stroke:0.22px #1f1f1f;transform:scaleX(0.8573);">Digital &amp; Creative</span>
<span class="t" style="left:462.8px;top:337.00px;font-size:11.2px;color:#1f1f1f;-webkit-text-stroke:0.22px #1f1f1f;transform:scaleX(0.8712);">Management</span>
<span class="t" style="left:624.4px;top:337.00px;font-size:11.2px;color:#1f1f1f;-webkit-text-stroke:0.22px #1f1f1f;transform:scaleX(0.8480);">Legal Jobs</span>
<span class="t" style="left:791.4px;top:337.00px;font-size:11.2px;color:#1f1f1f;-webkit-text-stroke:0.22px #1f1f1f;transform:scaleX(0.8564);">Retail</span>
<span class="t" style="left:522.9px;top:425.00px;font-size:16px;color:#f9a11c;font-family:'Liberation Serif',serif;-webkit-text-stroke:0.45px #f9a11c;transform:scaleX(0.9959);">BROWSE</span>
<span class="t" style="left:592.7px;top:425.00px;font-size:16px;color:#111111;font-weight:700;font-family:'Liberation Serif',serif;transform:scaleX(0.9121);">JOBS</span>
<span class="t" style="left:284.5px;top:507.00px;font-size:8.2px;color:#222222;-webkit-text-stroke:0.15px #222222;transform:scaleX(0.7354);">INFORMATION</span>
<span class="t" style="left:284.5px;top:518.00px;font-size:8.2px;color:#222222;-webkit-text-stroke:0.15px #222222;transform:scaleX(0.7413);">TECHNOLOGY</span>
<span class="t" style="left:368.4px;top:508.00px;font-size:8.2px;color:#222222;-webkit-text-stroke:0.15px #222222;transform:scaleX(0.7434);">BANKING</span>
<span class="t" style="left:437.1px;top:508.00px;font-size:8.2px;color:#222222;-webkit-text-stroke:0.15px #222222;transform:scaleX(0.7466);">ACCOUNTING</span>
<span class="t" style="left:502.5px;top:501.00px;font-size:8.2px;color:#fff0d4;transform:scaleX(0.7380);">SALES &amp; MARKETING</span>
<span class="t" style="left:579.7px;top:508.00px;font-size:8.2px;color:#222222;-webkit-text-stroke:0.15px #222222;transform:scaleX(0.7333);">DIGITAL &amp; CREATIVE</span>
<span class="t" style="left:662.9px;top:508.00px;font-size:8.2px;color:#222222;-webkit-text-stroke:0.15px #222222;transform:scaleX(0.7719);">MANAGEMENT</span>
<span class="t" style="left:742.7px;top:508.00px;font-size:8.2px;color:#222222;-webkit-text-stroke:0.15px #222222;transform:scaleX(0.7415);">LEGAL JOBS</span>
<span class="t" style="left:826.9px;top:508.00px;font-size:8.2px;color:#222222;-webkit-text-stroke:0.15px #222222;transform:scaleX(0.7448);">RETAIL</span>
</div>
</body></html>
